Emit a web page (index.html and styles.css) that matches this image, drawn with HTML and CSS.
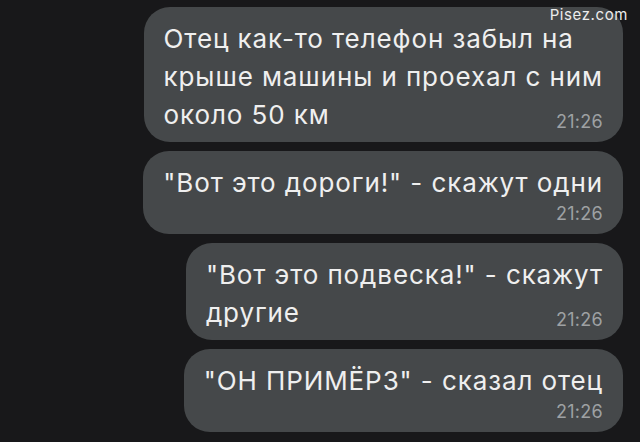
FILE: index.html
```html
<!DOCTYPE html>
<html lang="ru">
<head>
    <meta charset="UTF-8">
    <meta name="viewport" content="width=device-width, initial-scale=1.0">
    <title>Чат</title>
    <link rel="stylesheet" href="styles.css">
</head>
<body>
    <div class="chat">
        <div class="msg inline-time">
            <p class="text">Отец как-то телефон забыл на<br>крыше машины и проехал с ним<br>около 50 км</p>
            <span class="time">21:26</span>
        </div>
        <div class="msg">
            <p class="text">"Вот это дороги!" - скажут одни</p>
            <span class="time">21:26</span>
        </div>
        <div class="msg inline-time">
            <p class="text">"Вот это подвеска!" - скажут<br>другие</p>
            <span class="time">21:26</span>
        </div>
        <div class="msg">
            <p class="text">"ОН ПРИМЁРЗ" - сказал отец</p>
            <span class="time">21:26</span>
        </div>
    </div>

    <span class="watermark">Pisez.com</span>
</body>
</html>
```

FILE: styles.css
```css
body {
    margin: 0;
    height: 100vh;
    overflow: hidden;
    position: relative;
    background-color: #18181a;
    font-family: Inter, Roboto, "Liberation Sans", sans-serif;
}

.chat {
    display: flex;
    flex-direction: column;
    align-items: flex-end;
    gap: 9px;
    padding: 7px 17px 0 0;
}

.msg {
    display: flex;
    flex-direction: column;
    background-color: #45484a;
    border-radius: 26px;
    padding: 13px 20px 10px 20px;
}

.text {
    margin: 0;
    font-size: 26px;
    line-height: 38px;
    letter-spacing: 0.9px;
    color: #efefef;
    white-space: nowrap;
}

.time {
    align-self: flex-end;
    font-size: 18px;
    line-height: 20px;
    letter-spacing: 0.3px;
    color: #9ea1a3;
    margin-top: 2px;
}

/* время на одной строке с последней строкой текста */
.msg.inline-time .time {
    margin-top: -22px;
}

.watermark {
    position: absolute;
    top: 5px;
    right: 12px;
    font-size: 15px;
    letter-spacing: 0.6px;
    color: #ececec;
}
```
